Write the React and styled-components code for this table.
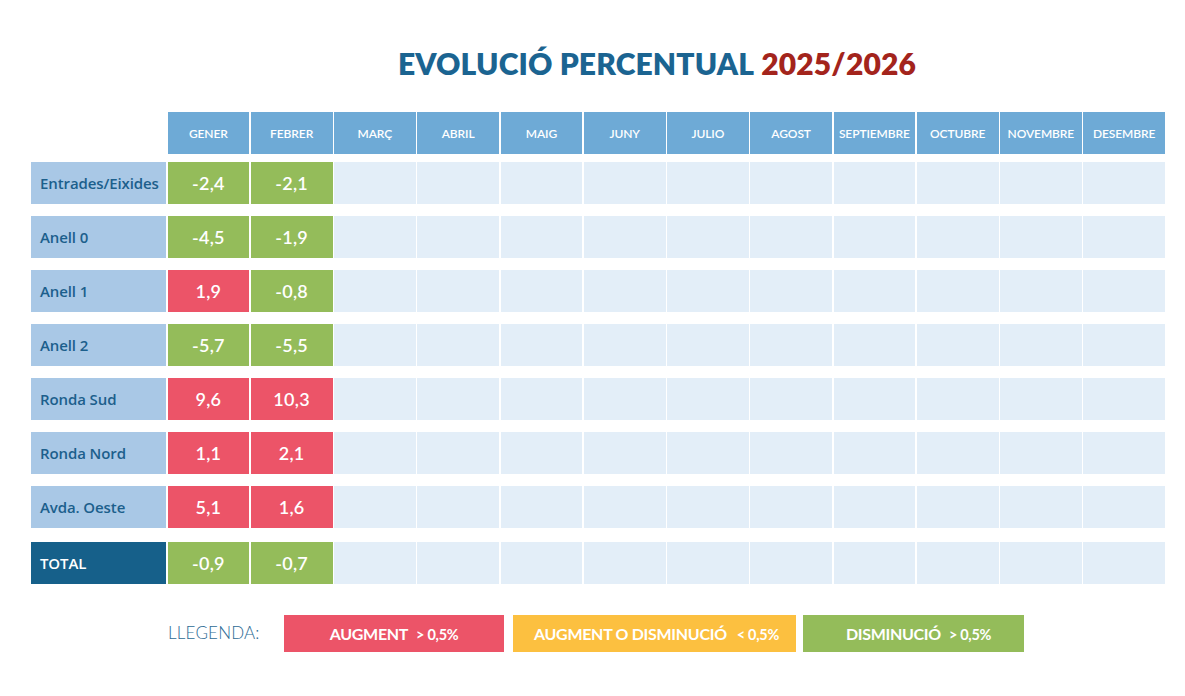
import React from "react";
import styled, { createGlobalStyle } from "styled-components";

const Global = createGlobalStyle`
  html, body { margin: 0; padding: 0; background: #ffffff; }
  body { font-family: Lato, "Open Sans", "Liberation Sans", sans-serif; }
`;

const C = {
  head: "#6eaad6",
  label: "#a9c8e6",
  labelText: "#1c5f8c",
  empty: "#e3eef8",
  green: "#94bc5a",
  red: "#ec5468",
  yellow: "#fcc040",
  total: "#16608a",
  titleBlue: "#1b6491",
  titleRed: "#a3241c",
};

const Page = styled.div`
  width: 1185px;
  height: 696px;
  box-sizing: border-box;
  padding: 44px 20px 0 31px;
  display: flex;
  flex-direction: column;
`;

const Title = styled.h1`
  margin: 0 0 0 367px;
  height: 38px;
  font-size: 30px;
  line-height: 38px;
  font-weight: 800;
  letter-spacing: 0.15px;
  color: ${C.titleBlue};
  white-space: nowrap;
`;

const Year = styled.span`
  color: ${C.titleRed};
  margin-left: 7px;
`;

const Table = styled.div`
  margin-top: 30px;
  width: 1134px;
  display: flex;
  flex-direction: column;
  gap: 12px;
`;

const Row = styled.div`
  display: grid;
  grid-template-columns: 135px repeat(12, 1fr);
  column-gap: 1.5px;
  height: 42px;
  margin-top: ${(p) => p.$mt || 0}px;
  margin-bottom: ${(p) => p.$mb || 0}px;
`;

const Blank = styled.div``;

const HeadCell = styled.div`
  background: ${C.head};
  color: #ffffff;
  font-size: 12px;
  font-weight: 600;
  display: flex;
  align-items: center;
  justify-content: center;
  letter-spacing: -0.1px;
  white-space: nowrap;
`;

const Label = styled.div`
  background: ${(p) => (p.$total ? C.total : C.label)};
  color: ${(p) => (p.$total ? "#ffffff" : C.labelText)};
  font-family: "Open Sans", Lato, sans-serif;
  font-size: 15px;
  font-weight: 600;
  letter-spacing: -0.1px;
  display: flex;
  align-items: center;
  padding-left: 9px;
  white-space: nowrap;
`;

const Cell = styled.div`
  background: ${(p) => (p.$tone === "red" ? C.red : p.$tone === "green" ? C.green : C.empty)};
  color: #ffffff;
  font-size: 18px;
  font-weight: 600;
  display: flex;
  align-items: center;
  justify-content: center;
  letter-spacing: 0.3px;
`;

const Legend = styled.div`
  margin-top: 31px;
  display: flex;
  align-items: center;
  height: 37px;
`;

const LegendTitle = styled.div`
  margin-left: 137px;
  width: 116px;
  color: #2d6b95;
  font-size: 17px;
  font-weight: 300;
  letter-spacing: 0.2px;
  padding-bottom: 2px;
`;

const Swatch = styled.div`
  background: ${(p) => p.$bg};
  width: ${(p) => p.$w}px;
  margin-right: ${(p) => p.$mr || 0}px;
  height: 37px;
  box-sizing: border-box;
  display: flex;
  align-items: center;
  justify-content: center;
  padding-left: ${(p) => p.$pl || 0}px;
  color: #ffffff;
  font-size: 16px;
  font-weight: 700;
  white-space: nowrap;
  letter-spacing: -0.3px;
`;

const Small = styled.span`
  font-size: 14.5px;
  font-weight: 700;
  margin-left: ${(p) => p.$ml || 8}px;
  position: relative;
  top: 1px;
`;

const months = [
  "GENER", "FEBRER", "MARÇ", "ABRIL", "MAIG", "JUNY",
  "JULIO", "AGOST", "SEPTIEMBRE", "OCTUBRE", "NOVEMBRE", "DESEMBRE",
];

const rows = [
  ["Entrades/Eixides", "-2,4", "-2,1"],
  ["Anell 0", "-4,5", "-1,9"],
  ["Anell 1", "1,9", "-0,8"],
  ["Anell 2", "-5,7", "-5,5"],
  ["Ronda Sud", "9,6", "10,3"],
  ["Ronda Nord", "1,1", "2,1"],
  ["Avda. Oeste", "5,1", "1,6"],
];

const tone = (v) => (v.startsWith("-") ? "green" : "red");

function DataRow({ label, values, total, mt }) {
  return (
    <Row $mt={mt}>
      <Label $total={total}>{label}</Label>
      {months.map((m, i) => {
        const v = values[i];
        return v ? (
          <Cell key={m} $tone={tone(v)}>{v}</Cell>
        ) : (
          <Cell key={m} />
        );
      })}
    </Row>
  );
}

export default function App() {
  return (
    <>
      <Global />
      <Page>
        <Title>
          EVOLUCIÓ PERCENTUAL<Year>2025/2026</Year>
        </Title>
        <Table>
          <Row $mb={-4}>
            <Blank />
            {months.map((m) => (
              <HeadCell key={m}>{m}</HeadCell>
            ))}
          </Row>
          {rows.map(([l, a, b]) => (
            <DataRow key={l} label={l} values={[a, b]} />
          ))}
          <DataRow label="TOTAL" values={["-0,9", "-0,7"]} total mt={2} />
        </Table>
        <Legend>
          <LegendTitle>LLEGENDA:</LegendTitle>
          <Swatch $bg={C.red} $w={220} $mr={9} $pl={0}>
            AUGMENT<Small $ml={8}>&gt; 0,5%</Small>
          </Swatch>
          <Swatch $bg={C.yellow} $w={283} $mr={7} $pl={4}>
            AUGMENT O DISMINUCIÓ<Small $ml={10}>&lt; 0,5%</Small>
          </Swatch>
          <Swatch $bg={C.green} $w={221} $pl={10}>
            DISMINUCIÓ<Small $ml={8}>&gt; 0,5%</Small>
          </Swatch>
        </Legend>
      </Page>
    </>
  );
}
